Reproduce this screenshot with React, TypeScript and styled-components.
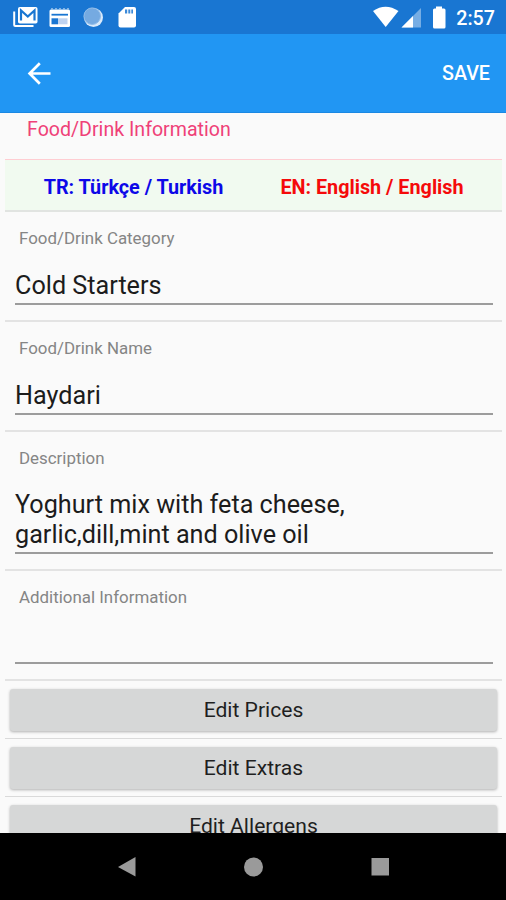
import React from "react";
import styled, { createGlobalStyle } from "styled-components";

const GlobalStyle = createGlobalStyle`
  * { box-sizing: border-box; }
  body { margin: 0; background: #fafafa; font-family: Roboto, "Liberation Sans", sans-serif; }
`;

const Screen = styled.div`
  display: flex;
  flex-direction: column;
  width: 506px;
  height: 900px;
  overflow: hidden;
  background: #fafafa;
`;

const StatusBar = styled.header`
  flex: none;
  display: flex;
  justify-content: space-between;
  height: 34px;
  background: #1976d2;
`;

const StatusIcons = styled.svg`
  display: block;
  height: 34px;
`;

const StatusRight = styled.div`
  display: flex;
  align-items: center;
  padding-right: 11px;
`;

const Clock = styled.span`
  color: #fff;
  font-size: 19.7px;
  font-weight: 500;
  line-height: 34px;
  padding-top: 3px;
`;

const AppBar = styled.div`
  flex: none;
  display: flex;
  align-items: center;
  justify-content: space-between;
  height: 79px;
  padding: 0 16px 0 22px;
  background: #2196f3;
  border-bottom: 1px solid #1a88e3;
`;

const BarButton = styled.button`
  display: flex;
  align-items: center;
  border: 0;
  padding: 2px 0 0;
  background: none;
  color: #fff;
  font: 500 19.7px/26px Roboto, "Liberation Sans", sans-serif;
`;

const Content = styled.main`
  flex: 1;
  min-height: 0;
  overflow: hidden;
  padding: 0 4px 0 5px;
`;

const SectionTitle = styled.h2`
  height: 47px;
  margin: 0;
  padding: 5px 0 0 22px;
  border-bottom: 1px solid #ffcdd2;
  color: #ef4178;
  font-size: 19.6px;
  font-weight: 400;
  line-height: 24px;
`;

const Languages = styled.div`
  display: grid;
  grid-template-columns: 257px 220px;
  height: 52px;
  background: #f1faf0;
  border-bottom: 2px solid #e1e4e1;
`;

const Language = styled.div<{ $color: string }>`
  color: ${(p) => p.$color};
  font-size: 19.8px;
  font-weight: 700;
  line-height: 55px;
  text-align: center;
  white-space: nowrap;
`;

const Field = styled.section<{ $height: number }>`
  display: flex;
  flex-direction: column;
  height: ${(p) => p.$height}px;
  padding: 16px 9px 15px 10px;
  border-bottom: 2px solid #e3e3e3;
`;

const Label = styled.label`
  padding-left: 4px;
  color: #858585;
  font-size: 16.9px;
  line-height: 21px;
`;

const Value = styled.div`
  flex: 1;
  display: flex;
  flex-direction: column;
  justify-content: flex-end;
  padding-bottom: 3px;
  border-bottom: 2px solid #9c9c9c;
  color: #1c1c1c;
  font-size: 25.2px;
  line-height: 29.5px;
  white-space: pre-line;
`;

const ActionRow = styled.div`
  height: 58px;
  padding: 8px 5px 0;
  border-bottom: 1px solid #dadada;
`;

const ActionButton = styled.button`
  display: block;
  width: 100%;
  height: 42px;
  padding: 0;
  border: 0;
  border-radius: 3px;
  background: #d6d7d7;
  box-shadow: 0 1px 3px rgba(0, 0, 0, 0.3);
  color: #1f1f1f;
  font: 400 21.1px/42px Roboto, "Liberation Sans", sans-serif;
`;

const NavBar = styled.nav`
  flex: none;
  height: 67px;
  background: #000;
`;

const fields = [
  { label: "Food/Drink Category", value: "Cold Starters", height: 110 },
  { label: "Food/Drink Name", value: "Haydari", height: 110 },
  { label: "Description", value: "Yoghurt mix with feta cheese,\ngarlic,dill,mint and olive oil", height: 139 },
  { label: "Additional Information", value: "", height: 110 },
];

const actions = ["Edit Prices", "Edit Extras", "Edit Allergens"];

const NotificationIcons = () => (
  <StatusIcons width="150" height="34" viewBox="0 0 150 34" fill="none">
    <path d="M14.200 11.500V25a1 1 0 0 0 1 1H33.500" stroke="#fff" strokeWidth="2" />
    <rect x="18" y="7" width="19.500" height="16.500" rx="1.800" fill="#fff" />
    <path d="M21 20.500V10.500l6.800 6L34.500 10.500v10" stroke="#1976d2" strokeWidth="2.200" />
    <path d="M51 9.500h17.500a1.500 1.500 0 0 1 1.500 1.500v14.500a1.500 1.500 0 0 1-1.500 1.500H51a1.500 1.500 0 0 1-1.500-1.500V11A1.500 1.500 0 0 1 51 9.500z" fill="#fff" />
    <path d="M52 9.500V8M56 9.500V8M60 9.500V8M64 9.500V8M68 9.500V8" stroke="#b6d3f0" strokeWidth="1.300" />
    <path d="M51.500 14.700H68" stroke="#1976d2" strokeWidth="1.800" />
    <path d="M51.500 18.300h6.500v6h-6.500z" fill="#1976d2" />
    <path d="M58 18.300h9.500v6H58z" fill="#bfd3f0" />
    <circle cx="93.500" cy="17.500" r="9.500" fill="#d9eafb" />
    <circle cx="92.200" cy="16.200" r="8.300" fill="#75aae1" stroke="#8fbce9" />
    <path d="M125 7h9a2 2 0 0 1 2 2v16.500a2 2 0 0 1-2 2h-13.500a2 2 0 0 1-2-2V13.500z" fill="#fff" />
    <path d="M125 9.500h2.200v4H125zM128.300 9.500h2v4h-2zM131.300 9.500h1.700v4h-1.700z" fill="#1976d2" opacity=".85" />
  </StatusIcons>
);

const SystemIcons = () => (
  <StatusIcons width="84" height="34" viewBox="373 0 84 34">
    <path d="M374 11Q386.500 2.500 399.500 11L386.700 27z" fill="#fff" />
    <path d="M422 8v19.500h-19.500z" fill="#76ade4" />
    <path d="M414 16v11.500h-11.500z" fill="#fff" />
    <path d="M437 6.500h6v2h2a1.500 1.500 0 0 1 1.500 1.500v17a1.500 1.500 0 0 1-1.500 1.500h-9.500a1.500 1.500 0 0 1-1.500-1.500V10a1.500 1.500 0 0 1 1.500-1.500H437z" fill="#fff" />
  </StatusIcons>
);

export default function App() {
  return (
    <Screen>
      <GlobalStyle />
      <StatusBar>
        <NotificationIcons />
        <StatusRight>
          <SystemIcons />
          <Clock>2:57</Clock>
        </StatusRight>
      </StatusBar>
      <AppBar>
        <BarButton aria-label="Back">
          <svg width="34" height="34" viewBox="0 0 34 34" fill="none" stroke="#fff" strokeWidth="2.700">
            <path d="M28.500 16.500H8M17.800 6.300L7.600 16.500l10.200 10.200" />
          </svg>
        </BarButton>
        <BarButton>SAVE</BarButton>
      </AppBar>
      <Content>
        <SectionTitle>Food/Drink Information</SectionTitle>
        <Languages>
          <Language $color="#0d08e8">TR: Türkçe / Turkish</Language>
          <Language $color="#f50a0a">EN: English / English</Language>
        </Languages>
        {fields.map((f) => (
          <Field key={f.label} $height={f.height}>
            <Label>{f.label}</Label>
            <Value>{f.value}</Value>
          </Field>
        ))}
        {actions.map((a) => (
          <ActionRow key={a}>
            <ActionButton>{a}</ActionButton>
          </ActionRow>
        ))}
      </Content>
      <NavBar>
        <svg width="506" height="67" fill="#9a9a9a">
          <path d="M118 34L135.500 24v19.500z" />
          <circle cx="253.500" cy="34" r="9.500" />
          <rect x="371.500" y="25" width="17.500" height="17.500" />
        </svg>
      </NavBar>
    </Screen>
  );
}
